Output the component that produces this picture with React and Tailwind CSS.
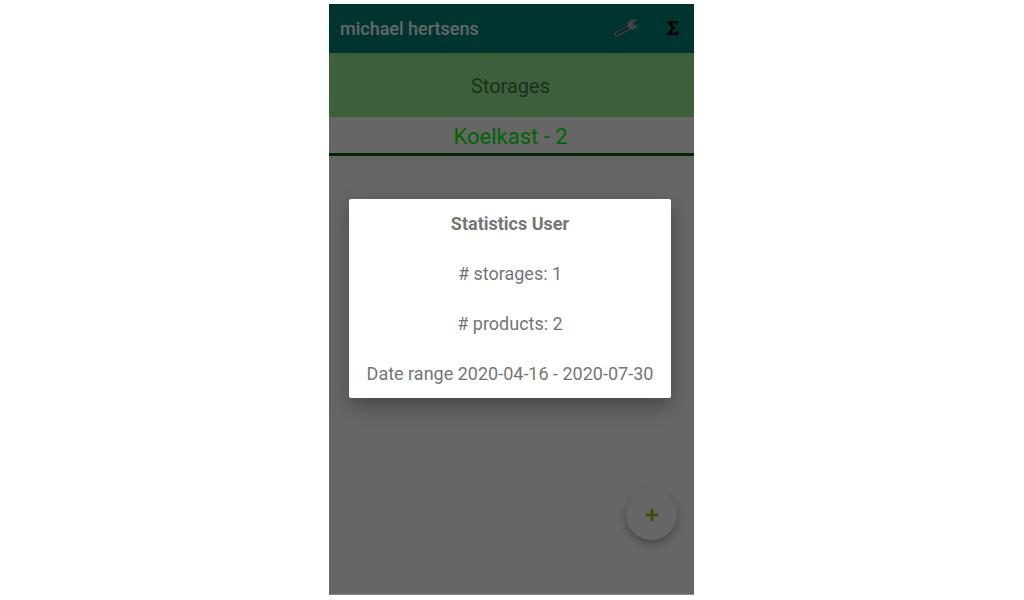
import React from "react";

const storages = [{ name: "Koelkast", count: 2 }];

function WrenchIcon() {
  return (
    <svg viewBox="0 0 26 20" className="h-5 w-[26px]" aria-hidden="true">
      <path
        d="M2.2 14.8 14.6 8.4C14.2 4.8 16.4 2 20 1.6L23.4 1.6 23.2 3 20 4.4 20 7 22 7.8 24.8 6.8C24.4 9.8 20.8 12 17 11.2L5.6 17.8C2.6 19.2.2 16.6 2.2 14.8Z"
        fill="#a4aaa8"
        stroke="#8a9492"
        strokeWidth="0.8"
        strokeLinejoin="round"
      />
      <path d="M4 16 14.6 10.2" stroke="#1f625a" strokeWidth="2.2" strokeLinecap="round" />
    </svg>
  );
}

function SigmaIcon() {
  return (
    <svg viewBox="0 0 12 14" className="h-3.5 w-3" aria-hidden="true">
      <path d="M.5 0H11V3.5H9V2.2H4.4L8 7 4.2 11.6H9.3V10H11.4V14H.4V12.2L4.8 7 .5 1.8Z" fill="#000" />
    </svg>
  );
}

export default function App() {
  return (
    <div className="flex min-h-screen justify-center bg-white pt-1 pr-px pb-[5px] font-['Roboto',sans-serif]">
      <div className="relative flex w-full max-w-[365px] flex-col overflow-hidden border-b border-[#888] bg-white">
        <header className="flex h-[49px] items-center bg-[#008577] pr-[15px] pl-[11px]">
          <h1 className="flex-1 text-lg font-medium text-white">michael hertsens</h1>
          <nav className="flex items-center gap-7 pb-0.5">
            <button type="button" aria-label="Settings">
              <WrenchIcon />
            </button>
            <button type="button" aria-label="Statistics">
              <SigmaIcon />
            </button>
          </nav>
        </header>
        <h2 className="flex h-16 items-center justify-center bg-[#96f091] pt-0.5 pr-0.5 text-xl text-[#4a764a]">
          Storages
        </h2>
        <ul>
          {storages.map((s) => (
            <li
              key={s.name}
              className="flex h-[39px] items-center justify-center border-b-3 border-[#006400] pt-0.5 pr-0.5 text-[22px] text-[#00ff00]"
            >
              {s.name} - {s.count}
            </li>
          ))}
        </ul>
        <button
          type="button"
          aria-label="Add storage"
          className="absolute right-[17px] bottom-[54px] flex size-[51px] items-center justify-center rounded-full bg-white shadow-[0_4px_8px_rgba(0,0,0,0.3)]"
        >
          <svg viewBox="0 0 12 12" className="size-3" aria-hidden="true">
            <path d="M6 0V12M0 6H12" stroke="#76c800" strokeWidth="2.6" />
          </svg>
        </button>
        <div className="absolute inset-0 flex items-center justify-center bg-black/60 pr-[23px] pb-0.5 pl-5">
          <section
            role="dialog"
            aria-labelledby="stats-title"
            className="flex w-full flex-col items-center gap-[26px] rounded-xs bg-white px-2 pt-[13px] pb-3 text-lg leading-6 whitespace-nowrap text-[#757575] shadow-[0_8px_20px_rgba(0,0,0,0.3)]"
          >
            <h3 id="stats-title" className="font-bold">Statistics User</h3>
            <p># storages: 1</p>
            <p># products: 2</p>
            <p>Date range 2020-04-16 - 2020-07-30</p>
          </section>
        </div>
      </div>
    </div>
  );
}
